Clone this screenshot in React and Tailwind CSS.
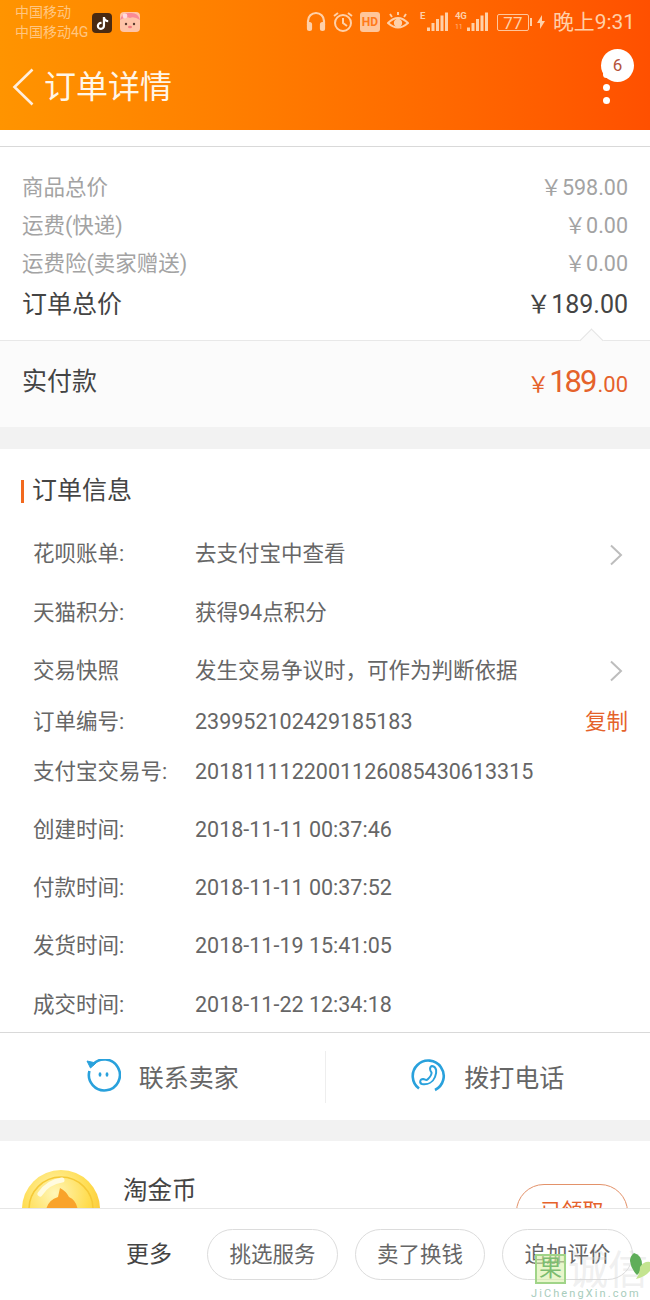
import { FaTiktok } from "react-icons/fa";

const font = { fontFamily: 'Roboto, "Noto Sans CJK SC", sans-serif' };

function Chevron() {
  return (
    <svg width="14" height="22" viewBox="0 0 14 22" fill="none" className="absolute right-[27px] top-1/2 -translate-y-1/2">
      <path d="M2 1.5 L12 11 L2 20.5" stroke="#bdbdbd" strokeWidth="2" />
    </svg>
  );
}

function Signal({ label, sub, w }) {
  return (
    <div className={`relative h-[20px] ${w}`}>
      <span className="absolute left-0 -top-[2px] text-[9.5px] font-bold leading-[12px] text-[#ffd0a8]">{label}</span>
      {sub && <span className="absolute left-0 top-[10px] text-[7px] leading-[10px] text-[#ffb98a]">{sub}</span>}
      <svg width="21" height="20" viewBox="0 0 21 20" className="absolute right-0 top-0" fill="#ffd0a8">
        <rect x="0" y="15.5" width="3" height="3.5" />
        <rect x="4.5" y="11" width="3" height="8" />
        <rect x="9" y="7" width="3" height="12" />
        <rect x="13.5" y="3.5" width="3" height="15.5" />
        <rect x="18" y="0.5" width="3" height="18.5" />
      </svg>
    </div>
  );
}

function StatusBar() {
  const c = "#ffd0a8";
  return (
    <div className="h-[48px] flex items-start">
      <div className="pl-[15px] pt-[2px] text-[14px] leading-[20px] text-[#ffc680]">
        <div>中国移动</div>
        <div>中国移动4G</div>
      </div>
      <div className="ml-[4px] mt-[13px] w-[20px] h-[20px] rounded-[4px] bg-[#4a2a12] flex items-center justify-center">
        <FaTiktok size={13} color="#fff" />
      </div>
      <svg width="20" height="20" viewBox="0 0 20 20" className="ml-[8px] mt-[12px]">
        <rect width="20" height="20" rx="4" fill="#ffc4a8" />
        <path d="M0 8 Q2 0 10 1 Q18 0 20 8 Q14 4 10 6 Q6 4 0 8Z" fill="#f98a96" />
        <circle cx="5" cy="4" r="2.4" fill="#ffd9de" />
        <circle cx="6" cy="12" r="1.2" fill="#5a3a30" />
        <circle cx="14" cy="12" r="1.2" fill="#5a3a30" />
        <ellipse cx="10" cy="15" rx="2" ry="1.2" fill="#f27c80" />
      </svg>
      <div className="ml-auto pr-[15px] mt-[9px] flex items-center h-[26px]">
        <svg width="20" height="22" viewBox="0 0 20 22" fill="none" stroke={c} strokeWidth="2.2">
          <path d="M2 14 V10 a8 8 0 0 1 16 0 V14" />
          <rect x="2" y="12" width="3" height="7" rx="1.4" fill={c} />
          <rect x="15" y="12" width="3" height="7" rx="1.4" fill={c} />
        </svg>
        <svg width="22" height="22" viewBox="0 0 22 22" fill="none" stroke={c} strokeWidth="2" className="ml-[6px]">
          <circle cx="11" cy="12" r="8" />
          <path d="M11 7 V12 L15 15 M2 5 L6 2 M20 5 L16 2" />
        </svg>
        <div className="ml-[6px] w-[20px] h-[20px] rounded-[3px] bg-[#ffc69b] text-[#ff7a1a] text-[12px] font-bold leading-[20px] text-center">HD</div>
        <svg width="22" height="20" viewBox="0 0 22 20" fill="none" stroke={c} strokeWidth="1.9" className="ml-[7px]">
          <path d="M1 11 Q11 1 21 11 Q11 20 1 11Z" />
          <circle cx="11" cy="11" r="3.2" fill={c} />
          <path d="M5 5 L3 2 M11 3 V0 M17 5 L19 2" />
        </svg>
        <div className="ml-[11px]"><Signal label="E" w="w-[28px]" /></div>
        <div className="ml-[7px]"><Signal label="4G" sub="11" w="w-[33px]" /></div>
        <div className="ml-[9px] w-[32px] h-[17px] border border-[#ffc69b] rounded-[2px] text-[#ffd0a8] text-[17px] leading-[16px] text-center">77</div>
        <div className="ml-[1px] w-[2px] h-[8px] bg-[#ffd0a8]"></div>
        <svg width="8" height="14" viewBox="0 0 8 14" fill={c} className="ml-[5px]">
          <path d="M5 0 L0 8 H3 L3 14 L8 6 H5Z" />
        </svg>
        <span className="ml-[8px] text-[20.9px] leading-[24px] text-[#ffd0a8]">晚上9:31</span>
      </div>
    </div>
  );
}

function Header() {
  return (
    <div className="h-[130px] shrink-0 bg-gradient-to-r from-[#ff9400] to-[#ff5000]">
      <StatusBar />
      <div className="relative h-[82px] flex items-start pl-[12px] pt-[20px]">
        <svg width="22" height="38" viewBox="0 0 22 38" fill="none">
          <path d="M20.5 1.5 L2.5 19 L20.5 36.5" stroke="#ffeedd" strokeWidth="2.6" />
        </svg>
        <span className="ml-[10px] text-[32px] leading-[38px] text-[#fff6e8]">订单详情</span>
        <div className="absolute left-[603px] top-[23px] flex flex-col gap-[6px]">
          <div className="w-[7px] h-[7px] rounded-full bg-white"></div>
          <div className="w-[7px] h-[7px] rounded-full bg-white"></div>
          <div className="w-[7px] h-[7px] rounded-full bg-white"></div>
        </div>
        <div className="absolute left-[601px] top-[1px] w-[33px] h-[33px] rounded-full bg-white text-[#b5533a] text-[17px] leading-[33px] text-center">6</div>
      </div>
    </div>
  );
}

function PriceRow({ label, value }) {
  return (
    <div className="h-[38px] flex items-center justify-between text-[21.5px] text-[#a3a3a3]">
      <span>{label}</span>
      <span>{value}</span>
    </div>
  );
}

function InfoRow({ label, value, h, chevron, copy }) {
  return (
    <div className={`relative flex items-center pl-[33px] text-[21.5px] text-[#666] ${h}`}>
      <span className="w-[162px]">{label}</span>
      <span>{value}</span>
      {chevron && <Chevron />}
      {copy && <span className="absolute right-[22px] text-[#e5622b]">复制</span>}
    </div>
  );
}

function Contact() {
  return (
    <div className="h-[87px] flex items-center">
      <div className="flex-1 flex items-center justify-center gap-[18px] text-[25px] text-[#666]">
        <svg width="35" height="35" viewBox="0 0 35 35" fill="none" stroke="#29a1dc" strokeWidth="2.6">
          <path d="M6.5 6 A15.5 15.5 0 1 1 3.4 12" />
          <path d="M1 2 L10 4 L4.5 9Z" fill="#29a1dc" strokeWidth="1" />
          <ellipse cx="14" cy="15.5" rx="1.4" ry="2.2" fill="#29a1dc" stroke="none" />
          <ellipse cx="21" cy="15.5" rx="1.4" ry="2.2" fill="#29a1dc" stroke="none" />
        </svg>
        <span className="pt-[4px]">联系卖家</span>
      </div>
      <div className="w-px h-[52px] bg-[#eeeeee]"></div>
      <div className="flex-1 flex items-center justify-center gap-[18px] text-[25px] text-[#666]">
        <svg width="35" height="35" viewBox="0 0 35 35" fill="none" stroke="#29a1dc" strokeWidth="2.6">
          <path d="M8 29.5 A15.5 15.5 0 1 1 24 31" />
          <path d="M21 7 C26 8 26 13 24 18 C22 23 17 26 11 25 C8 24 9 20 12 20 C15 20.5 15 22 17 20 C19 18 21 16 20.5 13.5 C19 12 18 8 21 7Z" strokeWidth="2" />
        </svg>
        <span className="pt-[4px]">拨打电话</span>
      </div>
    </div>
  );
}

function Coin() {
  return (
    <svg width="78" height="78" viewBox="0 0 78 78" className="shrink-0">
      <defs>
        <radialGradient id="coinFill" cx="42%" cy="30%" r="75%">
          <stop offset="0%" stopColor="#fff6b8" />
          <stop offset="60%" stopColor="#ffdc4e" />
          <stop offset="100%" stopColor="#f8bd30" />
        </radialGradient>
      </defs>
      <circle cx="39" cy="39" r="39" fill="url(#coinFill)" />
      <circle cx="39" cy="39" r="32" fill="none" stroke="#f6c936" strokeWidth="1.5" />
      <path d="M18 24 Q26 12 40 10" stroke="#fffbe0" strokeWidth="5" fill="none" strokeLinecap="round" />
      <path d="M38 18 Q44 21 47 27 Q56 31 56 44 Q50 60 39 60 Q24 56 24 40 Q26 30 36 27Z" fill="#f9a32b" />
    </svg>
  );
}

function FooterButton({ w, children }) {
  return (
    <div className={`h-[51px] pt-[3px] rounded-full border border-[#dcdcdc] flex items-center justify-center text-[21.5px] text-[#666] ${w}`}>
      {children}
    </div>
  );
}

export default function App() {
  return (
    <div className="relative w-[650px] h-[1300px] overflow-hidden bg-white flex flex-col" style={font}>
      <Header />

      <div className="flex-1 min-h-0 overflow-hidden">
        {/* price summary */}
        <div className="mt-[16px] border-t border-[#d9d9d9] pt-[22px] px-[22px] pb-[13px]">
          <PriceRow label="商品总价" value="￥598.00" />
          <PriceRow label="运费(快递)" value="￥0.00" />
          <PriceRow label="运费险(卖家赠送)" value="￥0.00" />
          <div className="h-[44px] flex items-center justify-between text-[25px] text-[#444]">
            <span>订单总价</span>
            <span>￥189.00</span>
          </div>
        </div>

        <div className="relative h-[87px] pb-[4px] border-t border-[#e8e8e8] bg-[#fbfbfb] flex items-center justify-between pl-[22px] pr-[22px]">
          <div className="absolute left-[583px] -top-[9px] w-[17px] h-[17px] rotate-45 bg-[#fbfbfb] border-l border-t border-[#e4e4e4]"></div>
          <span className="text-[25px] text-[#444]">实付款</span>
          <span className="flex items-baseline text-[#e5622b]">
            <span className="text-[22px]">￥</span>
            <span className="text-[31px] tracking-[-2px] mr-[2px]">189</span>
            <span className="text-[22px]">.00</span>
          </span>
        </div>

        <div className="h-[22px] bg-[#f2f2f2]"></div>

        {/* order info */}
        <div className="h-[76px] pt-[8px] pl-[21px] flex items-center">
          <div className="w-[3px] h-[23px] bg-[#f2691e]"></div>
          <span className="ml-[8px] text-[25px] text-[#444]">订单信息</span>
        </div>
        <InfoRow h="h-[59px]" label="花呗账单:" value="去支付宝中查看" chevron />
        <InfoRow h="h-[58px]" label="天猫积分:" value="获得94点积分" />
        <InfoRow h="h-[58px]" label="交易快照" value="发生交易争议时，可作为判断依据" chevron />
        <InfoRow h="h-[44px]" label="订单编号:" value="239952102429185183" copy />
        <InfoRow h="h-[57px]" label="支付宝交易号:" value="2018111122001126085430613315" />
        <InfoRow h="h-[58px]" label="创建时间:" value="2018-11-11 00:37:46" />
        <InfoRow h="h-[58px]" label="付款时间:" value="2018-11-11 00:37:52" />
        <InfoRow h="h-[58px]" label="发货时间:" value="2018-11-19 15:41:05" />
        <InfoRow h="h-[57px] pt-[3px]" label="成交时间:" value="2018-11-22 12:34:18" />

        <div className="border-t border-[#d9d9d9]">
          <Contact />
        </div>

        <div className="h-[21px] bg-[#f2f2f2]"></div>

        {/* coin card, cut off by the bottom bar */}
        <div className="pt-[29px] pl-[22px] pr-[22px] flex items-start">
          <Coin />
          <span className="ml-[23px] -mt-[2px] text-[24.5px] leading-[46px] text-[#444]">淘金币</span>
          <div className="ml-auto mt-[14px] w-[112px] h-[56px] shrink-0 rounded-[28px] border border-[#e3926a] flex items-center justify-center text-[21px] text-[#e5622b]">
            已领取
          </div>
        </div>
      </div>

      <div className="h-[92px] shrink-0 border-t border-[#e6e6e6] bg-white flex items-center justify-end gap-[17px] pr-[17px] pb-[1px]">
        <span className="mr-[18px] pt-[3px] text-[23px] text-[#444]">更多</span>
        <FooterButton w="w-[131px]">挑选服务</FooterButton>
        <FooterButton w="w-[130px]">卖了换钱</FooterButton>
        <FooterButton w="w-[131px]">追加评价</FooterButton>
      </div>

      {/* site watermark */}
      <div className="absolute left-[535px] top-[1254px] w-[31px] h-[30px] bg-[#d8f0a8]/60 border-[2px] border-[#a0d488] text-[#7cbc70] text-[23px] leading-[26px] text-center">果</div>
      <div className="absolute left-[568px] top-[1250px] text-[40px] leading-[42px] text-[#d8d8d8]/40 whitespace-nowrap">诚信</div>
      <svg width="22" height="28" viewBox="0 0 22 28" className="absolute left-[628px] top-[1253px]">
        <path d="M6 0 Q14 2 14 12 Q14 18 9 22 Q3 16 2 8 Q2 3 6 0Z" fill="#5fae5a" />
        <path d="M12 14 Q16 8 22 9 V18 Q17 24 8 26 Q12 20 12 14Z" fill="#c4e490" />
      </svg>
      <div className="absolute left-[531px] top-[1288px] text-[11px] leading-[12px] tracking-[2.1px] text-[#a8ccbc] whitespace-nowrap">JiChengXin.com</div>
    </div>
  );
}
